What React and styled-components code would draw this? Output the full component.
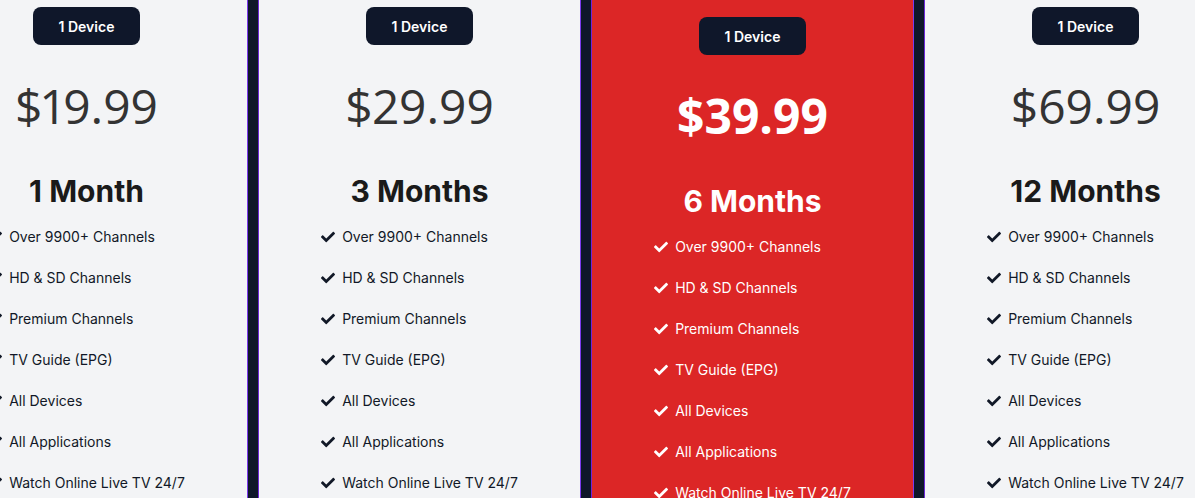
import React from 'react';
import styled, { createGlobalStyle } from 'styled-components';
import { FaCheck } from 'react-icons/fa';

const GlobalStyle = createGlobalStyle`
  html, body {
    margin: 0;
    padding: 0;
    overflow: hidden;
    background-color: #f3f4f6;
    font-family: Inter, "Noto Sans", sans-serif;
  }
`;

const PricingWrapper = styled.section`
  width: 100%;
  height: 498px;
  overflow: hidden;
`;

const PricingRow = styled.div`
  display: flex;
  align-items: stretch;
  margin-left: -74px;
  height: 100%;
`;

const Divider = styled.div`
  flex: 0 0 12px;
  box-sizing: border-box;
  background-color: #0f172a;
  border-left: 1px solid #7c3aed;
  border-right: 1px solid #6d28d9;
`;

const PlanCard = styled.div`
  flex: 0 0 321px;
  display: flex;
  flex-direction: column;
  align-items: center;
  padding-top: ${(p) => (p.$featured ? '17px' : '7px')};
  background-color: ${(p) => (p.$featured ? '#dc2626' : 'transparent')};
  color: ${(p) => (p.$featured ? '#ffffff' : '#111827')};

  & > * {
    flex-shrink: 0;
  }
`;

const DeviceBadge = styled.div`
  height: 38px;
  padding: 0 26px;
  display: flex;
  align-items: center;
  border-radius: 8px;
  background-color: #0f172a;
  color: #ffffff;
  font-size: 14px;
  font-weight: 600;
`;

const Price = styled.div`
  margin-top: 29px;
  font-family: "Open Sans", "Noto Sans", sans-serif;
  font-size: 48px;
  line-height: 64px;
  font-variant-numeric: ${(p) => (p.$featured ? 'tabular-nums' : 'proportional-nums')};
  font-weight: ${(p) => (p.$featured ? 700 : 400)};
  color: ${(p) => (p.$featured ? '#ffffff' : '#333333')};
`;

const Duration = styled.h3`
  margin: 35px 0 0;
  font-size: 30px;
  line-height: 36px;
  font-weight: 700;
  color: ${(p) => (p.$featured ? '#ffffff' : '#1a1a1a')};
`;

const FeatureList = styled.ul`
  list-style: none;
  margin: 18px 0 0;
  padding: 0;
  display: flex;
  flex-direction: column;
  gap: 21px;
`;

const FeatureItem = styled.li`
  display: flex;
  align-items: center;
  gap: 7px;
  font-size: 14px;
  line-height: 20px;
  white-space: nowrap;

  svg {
    flex: 0 0 auto;
    width: 14px;
    height: 14px;
  }
`;

const features = [
  'Over 9900+ Channels',
  'HD & SD Channels',
  'Premium Channels',
  'TV Guide (EPG)',
  'All Devices',
  'All Applications',
  'Watch Online Live TV 24/7',
];

const plans = [
  { price: '$19.99', duration: '1 Month' },
  { price: '$29.99', duration: '3 Months' },
  { price: '$39.99', duration: '6 Months', featured: true },
  { price: '$69.99', duration: '12 Months' },
];

function App() {
  return (
    <>
      <GlobalStyle />
      <PricingWrapper>
        <PricingRow>
          {plans.map((plan, index) => (
            <React.Fragment key={plan.duration}>
              {index > 0 && <Divider />}
              <PlanCard $featured={plan.featured}>
                <DeviceBadge>1 Device</DeviceBadge>
                <Price $featured={plan.featured}>{plan.price}</Price>
                <Duration $featured={plan.featured}>{plan.duration}</Duration>
                <FeatureList>
                  {features.map((feature) => (
                    <FeatureItem key={feature}>
                      <FaCheck />
                      {feature}
                    </FeatureItem>
                  ))}
                </FeatureList>
              </PlanCard>
            </React.Fragment>
          ))}
        </PricingRow>
      </PricingWrapper>
    </>
  );
}

export default App;
